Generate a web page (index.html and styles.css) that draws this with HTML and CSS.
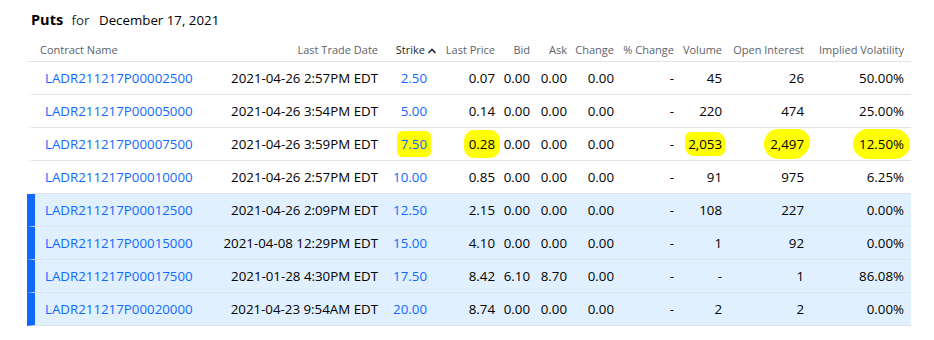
FILE: index.html
```html
<!DOCTYPE html>
<html lang="en">
<head>
  <meta charset="UTF-8" />
  <title>LADR Puts</title>
  <link rel="stylesheet" href="styles.css">
</head>
<body>
  <div class="options">
    <h3 class="title"><span class="kind">Puts</span> <span class="for">for</span> <span class="date">December 17, 2021</span></h3>
    <table class="chain">
      <colgroup>
        <col class="c-name"><col class="c-date"><col class="c-strike"><col class="c-last">
        <col class="c-bid"><col class="c-ask"><col class="c-chg"><col class="c-pct">
        <col class="c-vol"><col class="c-oi"><col class="c-iv">
      </colgroup>
      <thead>
        <tr>
          <th class="left">Contract Name</th>
          <th>Last Trade Date</th>
          <th class="sorted">Strike<svg class="caret" width="10" height="8" viewBox="0 0 10 8"><path d="M1.5 6 L5 2.5 L8.5 6" fill="none" stroke="currentColor" stroke-width="1.6"/></svg></th>
          <th>Last Price</th>
          <th>Bid</th>
          <th>Ask</th>
          <th>Change</th>
          <th>% Change</th>
          <th>Volume</th>
          <th>Open Interest</th>
          <th>Implied Volatility</th>
        </tr>
      </thead>
      <tbody>
        <tr>
          <td class="left"><a href="#">LADR211217P00002500</a></td>
          <td>2021-04-26 2:57PM EDT</td>
          <td><a href="#">2.50</a></td>
          <td>0.07</td><td>0.00</td><td>0.00</td><td>0.00</td><td>-</td>
          <td>45</td><td>26</td><td>50.00%</td>
        </tr>
        <tr>
          <td class="left"><a href="#">LADR211217P00005000</a></td>
          <td>2021-04-26 3:54PM EDT</td>
          <td><a href="#">5.00</a></td>
          <td>0.14</td><td>0.00</td><td>0.00</td><td>0.00</td><td>-</td>
          <td>220</td><td>474</td><td>25.00%</td>
        </tr>
        <tr>
          <td class="left"><a href="#">LADR211217P00007500</a></td>
          <td>2021-04-26 3:59PM EDT</td>
          <td><a href="#" class="mark mark-strike">7.50</a></td>
          <td><span class="mark mark-last">0.28</span></td><td>0.00</td><td>0.00</td><td>0.00</td><td>-</td>
          <td><span class="mark mark-vol">2,053</span></td>
          <td><span class="mark mark-oi">2,497</span></td>
          <td><span class="mark mark-iv">12.50%</span></td>
        </tr>
        <tr>
          <td class="left"><a href="#">LADR211217P00010000</a></td>
          <td>2021-04-26 2:57PM EDT</td>
          <td><a href="#">10.00</a></td>
          <td>0.85</td><td>0.00</td><td>0.00</td><td>0.00</td><td>-</td>
          <td>91</td><td>975</td><td>6.25%</td>
        </tr>
        <tr class="itm">
          <td class="left"><a href="#">LADR211217P00012500</a></td>
          <td>2021-04-26 2:09PM EDT</td>
          <td><a href="#">12.50</a></td>
          <td>2.15</td><td>0.00</td><td>0.00</td><td>0.00</td><td>-</td>
          <td>108</td><td>227</td><td>0.00%</td>
        </tr>
        <tr class="itm">
          <td class="left"><a href="#">LADR211217P00015000</a></td>
          <td>2021-04-08 12:29PM EDT</td>
          <td><a href="#">15.00</a></td>
          <td>4.10</td><td>0.00</td><td>0.00</td><td>0.00</td><td>-</td>
          <td>1</td><td>92</td><td>0.00%</td>
        </tr>
        <tr class="itm">
          <td class="left"><a href="#">LADR211217P00017500</a></td>
          <td>2021-01-28 4:30PM EDT</td>
          <td><a href="#">17.50</a></td>
          <td>8.42</td><td>6.10</td><td>8.70</td><td>0.00</td><td>-</td>
          <td>-</td><td>1</td><td>86.08%</td>
        </tr>
        <tr class="itm">
          <td class="left"><a href="#">LADR211217P00020000</a></td>
          <td>2021-04-23 9:54AM EDT</td>
          <td><a href="#">20.00</a></td>
          <td>8.74</td><td>0.00</td><td>0.00</td><td>0.00</td><td>-</td>
          <td>2</td><td>2</td><td>0.00%</td>
        </tr>
      </tbody>
    </table>
  </div>
</body>
</html>
```

FILE: styles.css
```css
* {
  margin: 0;
  padding: 0;
  box-sizing: border-box;
}
body {
  background: #ffffff;
  color: #000000;
  font-family: 'Open Sans', 'Liberation Sans', sans-serif;
}
.options {
  padding: 0 0 0 27px;
}
.title {
  height: 39px;
  padding: 10px 0 0 4px;
  line-height: 20px;
  font-weight: normal;
  font-size: 13.3px;
}
.kind {
  font-weight: bold;
  font-size: 14.5px;
  margin-right: 5px;
}
.for {
  color: #232a31;
  margin-right: 6px;
}
.chain {
  width: 884px;
  table-layout: fixed;
  border-collapse: separate;
  border-spacing: 0;
}
.c-name { width: 178px; }
.c-date { width: 180px; }
.c-strike { width: 49px; }
.c-last { width: 68px; }
.c-bid { width: 35px; }
.c-ask { width: 37px; }
.c-chg { width: 47px; }
.c-pct { width: 60px; }
.c-vol { width: 48px; }
.c-oi { width: 82px; }
.c-iv { width: 100px; }
th, td {
  text-align: right;
  padding: 0 7px 0 0;
  white-space: nowrap;
  border-bottom: 1px solid #e0e4e9;
}
th {
  height: 23px;
  padding-top: 1px;
  font-size: 11px;
  font-weight: normal;
  color: #5b636a;
  vertical-align: top;
  line-height: 20px;
}
th.left {
  text-align: left;
  padding-left: 13px;
}
th.sorted {
  color: #232a31;
}
.caret {
  margin: 0 -10px 0 2px;
  vertical-align: -1px;
}
td {
  height: 33px;
  font-size: 13.3px;
  line-height: 20px;
}
td.left {
  text-align: left;
  padding-left: 10px;
  border-left: 8px solid transparent;
}
a {
  color: #0f69ff;
  text-decoration: none;
}
.itm td {
  background: #e0f0ff;
}
.itm td.left {
  border-left-color: #0f69ff;
}
.mark {
  background: #ffff00;
  color: #000000;
}
a.mark {
  color: #0f69ff;
}
.mark-strike {
  box-shadow: 0 0 0 4px #ffff00;
  border-radius: 2px;
}
.mark-last {
  box-shadow: 0 0 0 5px #ffff00;
  border-radius: 5px;
}
.mark-vol {
  box-shadow: 0 0 0 3px #ffff00;
  border-radius: 3px 6px 3px 6px;
}
.mark-oi {
  box-shadow: 0 0 0 6px #ffff00;
  border-radius: 10px 8px 14px 10px;
}
.mark-iv {
  box-shadow: 0 0 0 6px #ffff00;
  border-radius: 14px;
}
```
